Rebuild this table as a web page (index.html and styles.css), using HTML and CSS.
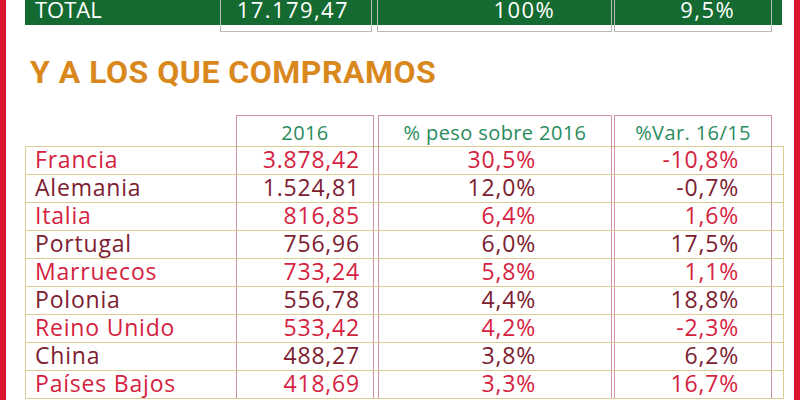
FILE: index.html
```html
<!DOCTYPE html>
<html lang="es">
<head>
<meta charset="utf-8">
<title>Y a los que compramos</title>
<link rel="stylesheet" href="styles.css">
</head>
<body>
<div class="page">
  <div class="side"></div>
  <main class="content">
    <div class="total">
      <div class="total-label">TOTAL</div>
      <div class="tbox t1">17.179,47</div>
      <div class="tspace"></div>
      <div class="tbox t2">100%</div>
      <div class="tspace"></div>
      <div class="tbox t3">9,5%</div>
    </div>

    <h2 class="title">Y A LOS QUE COMPRAMOS</h2>

    <div class="table">
      <div class="row head">
        <div class="name"></div>
        <div class="cell c1">2016</div>
        <div class="sp"></div>
        <div class="cell c2">% peso sobre 2016</div>
        <div class="sp"></div>
        <div class="cell c3">%Var. 16/15</div>
        <div class="sp"></div>
      </div>
      <div class="row red">
        <div class="name">Francia</div><div class="cell c1">3.878,42</div><div class="sp"></div><div class="cell c2">30,5%</div><div class="sp"></div><div class="cell c3">-10,8%</div><div class="sp"></div>
      </div>
      <div class="row dark">
        <div class="name">Alemania</div><div class="cell c1">1.524,81</div><div class="sp"></div><div class="cell c2">12,0%</div><div class="sp"></div><div class="cell c3">-0,7%</div><div class="sp"></div>
      </div>
      <div class="row red">
        <div class="name">Italia</div><div class="cell c1">816,85</div><div class="sp"></div><div class="cell c2">6,4%</div><div class="sp"></div><div class="cell c3">1,6%</div><div class="sp"></div>
      </div>
      <div class="row dark">
        <div class="name">Portugal</div><div class="cell c1">756,96</div><div class="sp"></div><div class="cell c2">6,0%</div><div class="sp"></div><div class="cell c3">17,5%</div><div class="sp"></div>
      </div>
      <div class="row red">
        <div class="name">Marruecos</div><div class="cell c1">733,24</div><div class="sp"></div><div class="cell c2">5,8%</div><div class="sp"></div><div class="cell c3">1,1%</div><div class="sp"></div>
      </div>
      <div class="row dark">
        <div class="name">Polonia</div><div class="cell c1">556,78</div><div class="sp"></div><div class="cell c2">4,4%</div><div class="sp"></div><div class="cell c3">18,8%</div><div class="sp"></div>
      </div>
      <div class="row red">
        <div class="name">Reino Unido</div><div class="cell c1">533,42</div><div class="sp"></div><div class="cell c2">4,2%</div><div class="sp"></div><div class="cell c3">-2,3%</div><div class="sp"></div>
      </div>
      <div class="row dark">
        <div class="name">China</div><div class="cell c1">488,27</div><div class="sp"></div><div class="cell c2">3,8%</div><div class="sp"></div><div class="cell c3">6,2%</div><div class="sp"></div>
      </div>
      <div class="row red last">
        <div class="name">Países Bajos</div><div class="cell c1">418,69</div><div class="sp"></div><div class="cell c2">3,3%</div><div class="sp"></div><div class="cell c3">16,7%</div><div class="sp"></div>
      </div>
    </div>
  </main>
  <div class="side"></div>
</div>
</body>
</html>
```

FILE: styles.css
```css
* { box-sizing: border-box; }

html, body {
  margin: 0;
  padding: 0;
  background: #ffffff;
}

.page {
  width: 800px;
  height: 400px;
  overflow: hidden;
  display: flex;
  background: #ffffff;
  font-family: "Open Sans", "DejaVu Sans", sans-serif;
}

.side {
  width: 6px;
  flex: 0 0 6px;
  background: #d9142e;
}

.content {
  flex: 1;
  padding-left: 19px;
  display: flex;
  flex-direction: column;
}

/* ---- total band ---- */
.total {
  width: 757px;
  height: 32px;
  display: grid;
  grid-template-columns: 195px 152px 5px 235px 2px 158px 10px;
  background: linear-gradient(#146a30, #146a30) no-repeat;
  background-size: 100% 25px;
  color: #ffffff;
  font-size: 22px;
  line-height: 19px;
}

.total-label {
  padding-left: 10px;
}

.tbox {
  border: 1px solid #b9b9b9;
  border-top: none;
  height: 32px;
  text-align: right;
  letter-spacing: 1.4px;
}

.t1 { padding-right: 22px; }
.t2 { padding-right: 56px; }
.t3 { padding-right: 36px; }

/* ---- title ---- */
.title {
  margin: 24px 0 0 5px;
  font-family: Roboto, "Liberation Sans", sans-serif;
  font-weight: 700;
  font-size: 32px;
  line-height: 32px;
  letter-spacing: 0.5px;
  color: #d9881d;
}

/* ---- table ---- */
.table {
  margin-top: 27px;
  width: 759px;
}

.row {
  display: grid;
  grid-template-columns: 210px 138px 4px 234px 2px 158px 11px;
  height: 28px;
  border: 1px solid #dccd92;
  border-bottom: none;
  font-size: 23px;
  line-height: 25px;
  letter-spacing: 0.8px;
}

.row.last {
  height: 29px;
  border-bottom: 1px solid #dccd92;
}

.row.head {
  height: 31px;
  border: none;
  padding: 0 1px;
}

.name {
  padding-left: 9px;
  white-space: nowrap;
}

.cell {
  border-left: 1px solid #cf95a3;
  border-right: 1px solid #cf95a3;
  text-align: right;
  white-space: nowrap;
}

.c1 { padding-right: 13px; }
.c2 { padding-right: 75px; }
.c3 { padding-right: 32px; }

.head .cell {
  border-top: 1px solid #cf95a3;
  text-align: center;
  padding: 3px 0 0 0;
  font-size: 20px;
  line-height: 28px;
  letter-spacing: 0.4px;
  color: #2a8b5d;
}

.red { color: #d5223f; }
.dark { color: #7c2030; }
```
